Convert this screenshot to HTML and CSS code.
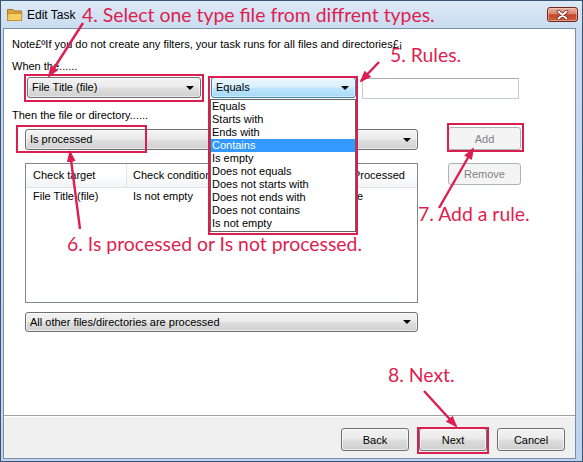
FILE: index.html
```html
<!DOCTYPE html>
<html>
<head>
<meta charset="utf-8">
<title>Edit Task</title>
<link rel="stylesheet" href="styles.css">
</head>
<body>
<div class="window">
  <div class="titlebar">
    <svg class="folder" width="16" height="14" viewBox="0 0 16 14">
      <path d="M0.5 1.5 H6 L7.5 3 H14.5 V12.5 H0.5 Z" fill="#dba23a" stroke="#a87524"/>
      <path d="M1 5.5 H15 L14.5 12.5 H0.5 Z" fill="#f6cf62" stroke="#c08a2c" stroke-width="0.8"/>
    </svg>
    <span class="title">Edit Task</span>
    <div class="close">
      <svg width="13" height="10" viewBox="0 0 13 10">
        <path d="M2.5 1.5 L10.5 8.5 M10.5 1.5 L2.5 8.5" stroke="#6a2418" stroke-width="3.6" stroke-linecap="round"/>
        <path d="M2.5 1.5 L10.5 8.5 M10.5 1.5 L2.5 8.5" stroke="#ffffff" stroke-width="2" stroke-linecap="round"/>
      </svg>
    </div>
  </div>
  <div class="client">
    <div class="main">
      <p class="note">Note£ºIf you do not create any filters, your task runs for all files and directories£¡</p>
      <p class="label gap-when">When the......</p>
      <div class="row1">
        <div class="combo target">File Title (file)</div>
        <div class="dd">
          <div class="combo focus">Equals</div>
          <ul class="dd-list">
            <li>Equals</li>
            <li>Starts with</li>
            <li>Ends with</li>
            <li class="sel">Contains</li>
            <li>Is empty</li>
            <li>Does not equals</li>
            <li>Does not starts with</li>
            <li>Does not ends with</li>
            <li>Does not contains</li>
            <li>Is not empty</li>
          </ul>
        </div>
        <div class="textbox"></div>
      </div>
      <p class="label gap-then">Then the file or directory......</p>
      <div class="grid">
        <div class="combo action">Is processed</div>
        <button class="btn side disabled">Add</button>
        <div class="listview">
          <div class="lv-head">
            <div class="col c1">Check target</div>
            <div class="col c2">Check condition</div>
            <div class="col c3">Processed</div>
          </div>
          <div class="lv-row">
            <div class="col c1">File Title (file)</div>
            <div class="col c2">Is not empty</div>
            <div class="col c3">True</div>
          </div>
        </div>
        <button class="btn side disabled remove">Remove</button>
        <div class="combo other">All other files/directories are processed</div>
      </div>
    </div>
    <div class="footer">
      <button class="btn foot">Back</button>
      <button class="btn foot">Next</button>
      <button class="btn foot">Cancel</button>
    </div>
  </div>
</div>

<div class="annot">
  <svg class="arrows" width="583" height="462" viewBox="0 0 583 462">
    <defs>
      <marker id="ah" viewBox="0 0 12 9" refX="10" refY="4.5" markerWidth="5" markerHeight="3.8" orient="auto" markerUnits="strokeWidth">
        <path d="M0 0 L12 4.5 L0 9 Z" fill="#dc1f50"/>
      </marker>
    </defs>
    <g stroke="#dc1f50" stroke-width="2.4" fill="none" marker-end="url(#ah)">
      <line x1="83" y1="23" x2="49" y2="76"/>
      <line x1="379" y1="62" x2="361" y2="81"/>
      <line x1="80" y1="229" x2="70" y2="152"/>
      <line x1="439" y1="208" x2="473" y2="149"/>
      <line x1="424" y1="391" x2="456" y2="426"/>
    </g>
  </svg>
  <div class="box box-target"></div>
  <div class="box box-dd"></div>
  <div class="box box-action"></div>
  <div class="box box-add"></div>
  <div class="box box-next"></div>
  <div class="note-label n4">4. Select one type file from diffrent types.</div>
  <div class="note-label n5">5. Rules.</div>
  <div class="note-label n6">6. Is processed or Is not processed.</div>
  <div class="note-label n7">7. Add a rule.</div>
  <div class="note-label n8">8. Next.</div>
</div>
</body>
</html>
```

FILE: styles.css
```css
* { box-sizing: border-box; }
html, body { margin: 0; padding: 0; }
body {
  width: 583px;
  height: 462px;
  overflow: hidden;
  position: relative;
  font-family: "Liberation Sans", Arial, sans-serif;
  font-size: 11px;
  color: #000;
  background: #c5d8ee;
}

/* ---------- window frame ---------- */
.window {
  width: 583px;
  height: 462px;
  border: 1px solid #3a5473;
  background: linear-gradient(180deg, #dce9f6 0px, #c8dbf0 30px, #bfd4ec 100%);
  display: flex;
  flex-direction: column;
}
.titlebar {
  height: 27px;
  flex: none;
  display: flex;
  align-items: center;
  padding-left: 6px;
}
.folder { flex: none; margin-right: 4px; margin-top: 1px; }
.title {
  font-family: "Liberation Sans", Arial, sans-serif;
  font-size: 12px;
  color: #000;
}
.close {
  margin-left: auto;
  align-self: flex-start;
  margin-top: 6px;
  margin-right: 4px;
  width: 31px;
  height: 15px;
  border: 1px solid #6e2a1c;
  border-radius: 3px;
  background: linear-gradient(180deg, #eab3a3 0%, #dc8468 45%, #c4442b 52%, #d0603d 100%);
  box-shadow: inset 0 0 0 1px rgba(255, 220, 210, 0.45);
  display: flex;
  align-items: center;
  justify-content: center;
}

.client {
  flex: 1;
  margin: 0 6px 2px 2px;
  border: 1px solid #7d8fa5;
  background: #fff;
  display: flex;
  flex-direction: column;
}
.main {
  height: 386px;
  flex: none;
  padding: 9px 0 0 8px;
}
.note, .label {
  margin: 0;
  line-height: 13px;
  white-space: nowrap;
}
.gap-when { margin-top: 9px; }
.gap-then { margin-top: 10px; }

/* ---------- combos ---------- */
.combo {
  position: relative;
  height: 21px;
  border: 1px solid #707070;
  border-radius: 3px;
  background: linear-gradient(180deg, #f3f3f3 0%, #ebebeb 48%, #dedede 52%, #d1d1d1 100%);
  box-shadow: inset 0 0 0 1px rgba(255, 255, 255, 0.55);
  padding-left: 4px;
  line-height: 19px;
  white-space: nowrap;
}
.combo::after {
  content: "";
  position: absolute;
  right: 6px;
  top: 8px;
  border-left: 4px solid transparent;
  border-right: 4px solid transparent;
  border-top: 4px solid #000;
}
.combo.focus {
  border-color: #3c7fb1;
  background: linear-gradient(180deg, #eaf6fd 0%, #d9effc 48%, #bee6fd 52%, #a7d9f5 100%);
}

.row1 {
  display: flex;
  align-items: flex-start;
  margin: 4px 0 0 15px;
}
.target { width: 174px; }
.dd {
  position: relative;
  width: 145px;
  margin-left: 10px;
}
.dd-list {
  position: absolute;
  left: -1px;
  top: 22px;
  width: 146px;
  margin: 0;
  padding: 0 0 1px 0;
  list-style: none;
  background: #fff;
  border: 1px solid #646464;
  z-index: 5;
}
.dd-list li {
  height: 13px;
  line-height: 13px;
  padding-left: 1px;
  white-space: nowrap;
}
.dd-list li.sel {
  background: #3399ff;
  color: #fff;
}
.textbox {
  width: 157px;
  height: 21px;
  margin-left: 6px;
  margin-top: 1px;
  border: 1px solid #c5c9d0;
  border-top-color: #abadb3;
  background: #fff;
}

/* ---------- grid ---------- */
.grid {
  display: grid;
  grid-template-columns: 393px 73px;
  column-gap: 30px;
  margin: 5px 0 0 13px;
  align-items: start;
}
.action { margin-top: 2px; }
.listview {
  margin-top: 13px;
  height: 140px;
  border: 1px solid #828790;
  background: #fff;
}
.lv-head {
  display: flex;
  height: 24px;
  background: linear-gradient(180deg, #ffffff 0%, #ffffff 40%, #f3f4f6 100%);
  border-bottom: 1px solid #e2e3e5;
}
.lv-head .col {
  line-height: 23px;
  border-right: 1px solid #e5e5e5;
}
.lv-row { display: flex; }
.lv-row .col { line-height: 17px; }
.col { white-space: nowrap; }
.c1 { width: 101px; padding-left: 7px; }
.c2 { width: 220px; padding-left: 6px; }
.c3 { flex: 1; padding-left: 6px; }
.lv-head .c3 { border-right: none; }
.lv-row .c2 { width: 214px; }
.lv-row .c3 { padding-left: 0; }
.other { margin-top: 9px; height: 20px; line-height: 18px; }
.other::after { top: 7px; }

/* ---------- buttons ---------- */
.btn {
  font-family: "Liberation Sans", Arial, sans-serif;
  font-size: 11px;
  color: #000;
  border: 1px solid #707070;
  border-radius: 3px;
  background: linear-gradient(180deg, #f2f2f2 0%, #ebebeb 48%, #dddddd 52%, #cfcfcf 100%);
  box-shadow: inset 0 0 0 1px rgba(255, 255, 255, 0.6);
  padding: 0;
  margin: 0;
}
.btn.side { width: 73px; height: 23px; }
.btn.remove { height: 22px; margin-top: 13px; }
.btn.disabled {
  border-color: #adb2b5;
  background: #f4f4f4;
  color: #838383;
  box-shadow: none;
}
.footer {
  flex: 1;
  background: #f0f0f0;
  border-top: 1px solid #a0a0a0;
  box-shadow: inset 0 1px 0 #ffffff;
  display: flex;
  justify-content: flex-end;
  align-items: flex-start;
  gap: 10px;
  padding: 12px 10px 0 0;
}
.btn.foot { width: 68px; height: 23px; }

/* ---------- annotations overlay ---------- */
.annot {
  position: absolute;
  left: 0;
  top: 0;
  width: 583px;
  height: 462px;
  pointer-events: none;
  z-index: 10;
}
.arrows { position: absolute; left: 0; top: 0; }
.box {
  position: absolute;
  border: 2px solid #d81f4e;
}
.box-target { left: 24px; top: 74px; width: 180px; height: 28px; }
.box-dd { left: 208px; top: 76px; width: 150px; height: 159px; }
.box-action { left: 16px; top: 125px; width: 131px; height: 28px; }
.box-add { left: 447px; top: 123px; width: 77px; height: 29px; }
.box-next { left: 417px; top: 427px; width: 72px; height: 27px; }
.note-label {
  position: absolute;
  font-family: Lato, "Liberation Sans", sans-serif;
  font-size: 19.4px;
  line-height: 20px;
  color: #dc1f50;
  white-space: nowrap;
}
.n4 { left: 82px; top: 5px; }
.n5 { left: 390px; top: 45px; }
.n6 { left: 67px; top: 234px; }
.n7 { left: 418px; top: 204px; }
.n8 { left: 388px; top: 365px; }
```
